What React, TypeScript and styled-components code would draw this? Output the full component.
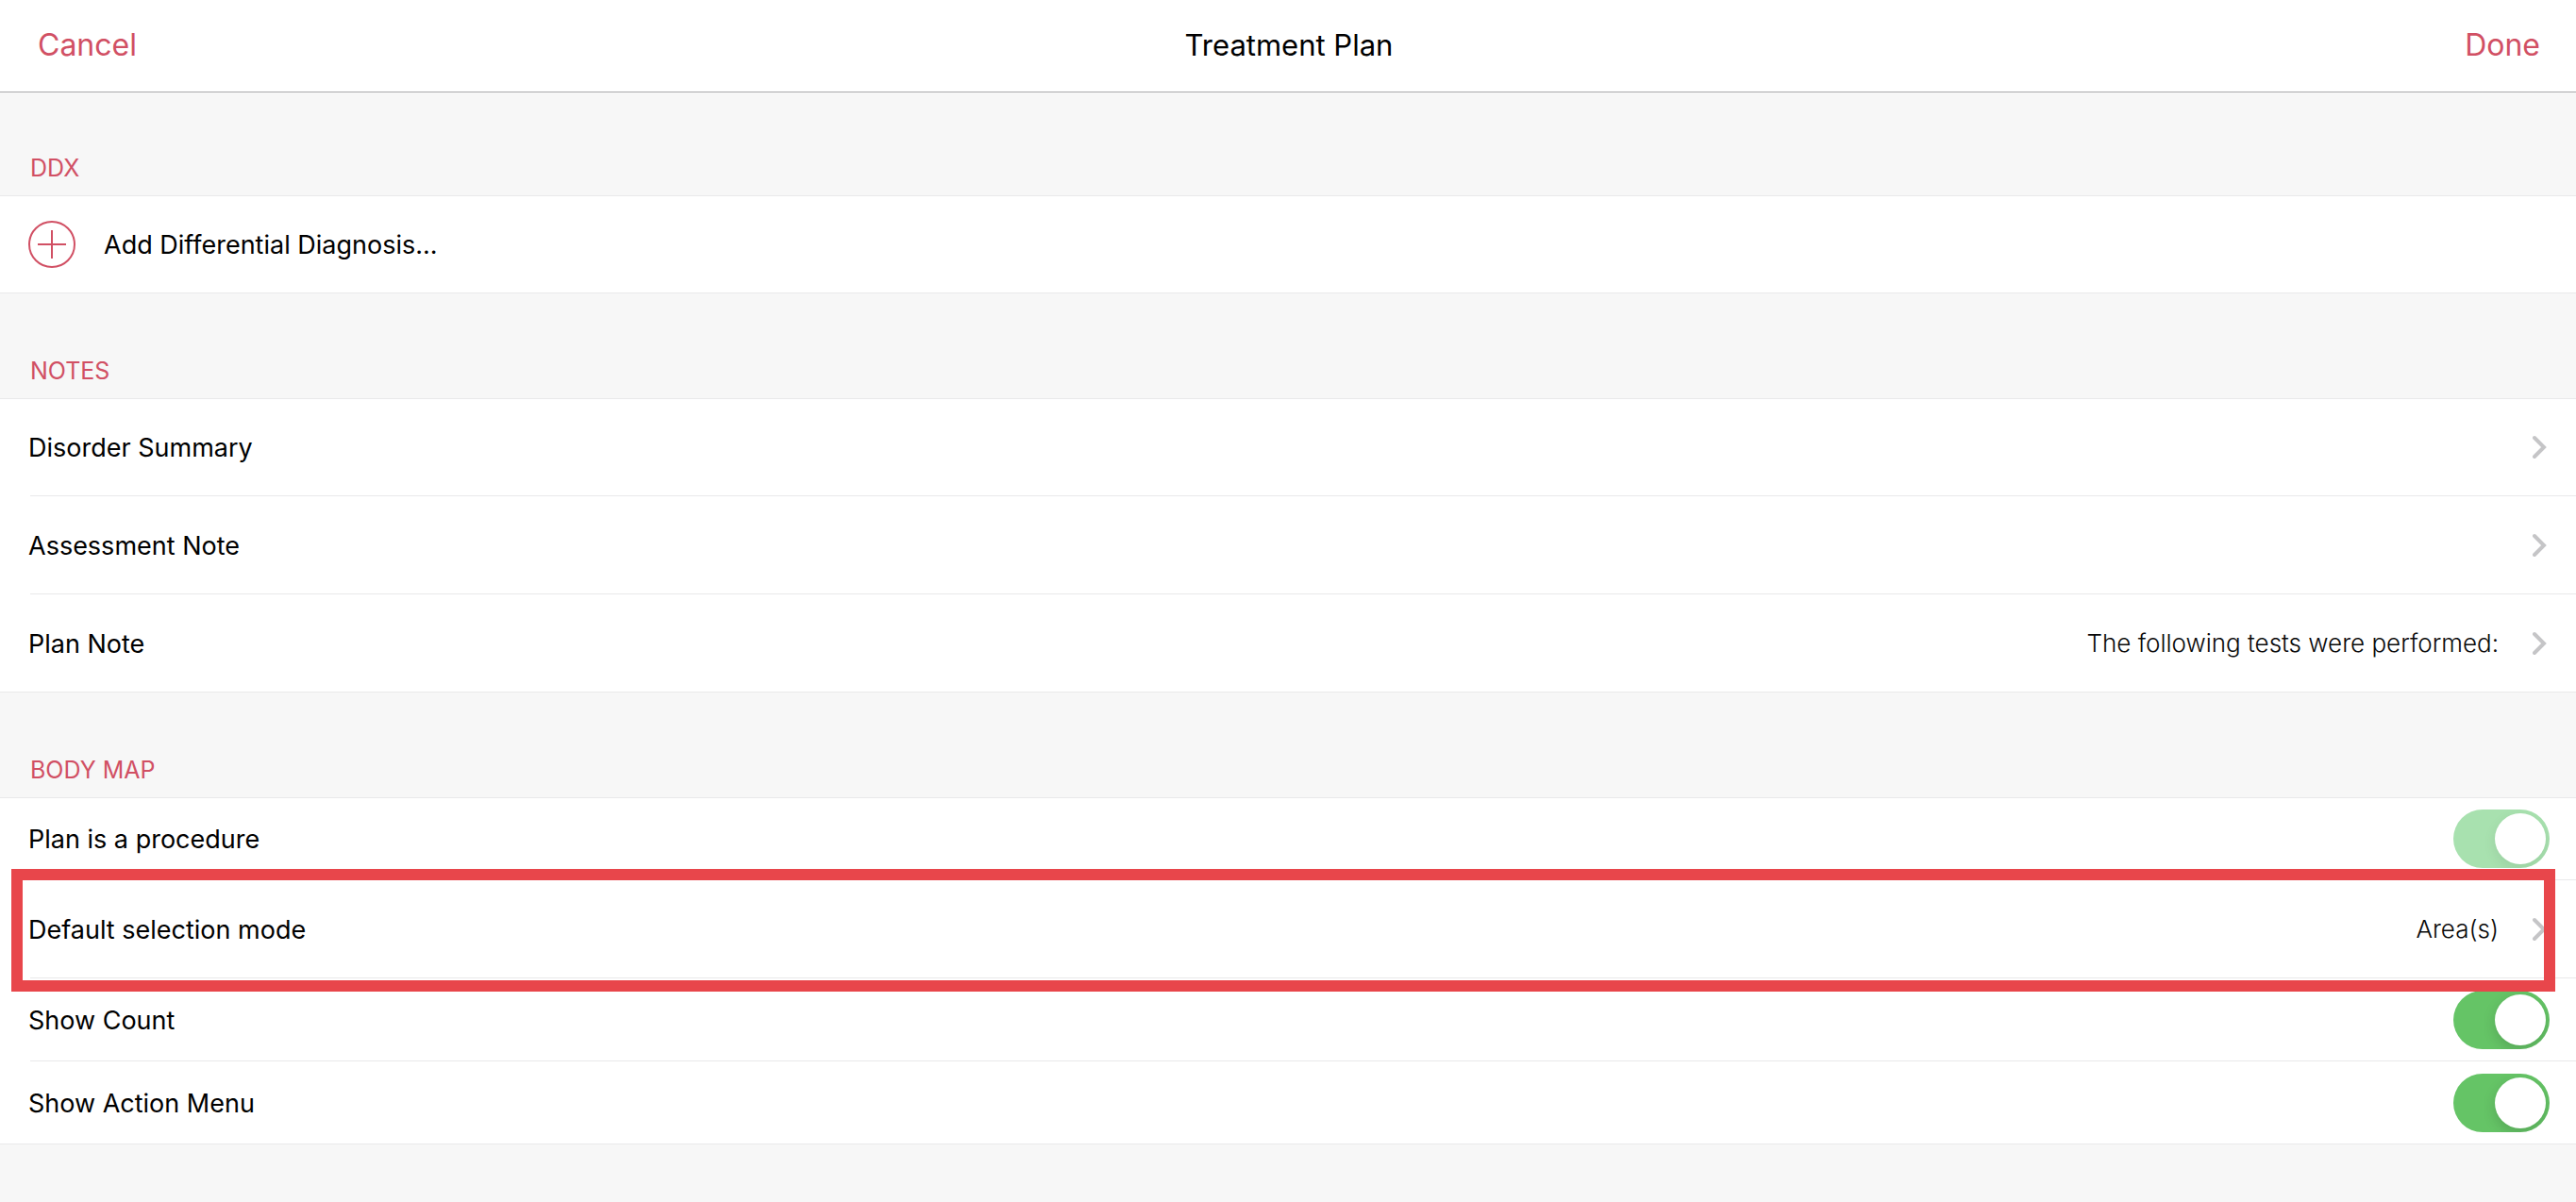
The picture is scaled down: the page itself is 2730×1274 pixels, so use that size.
import React, { useState } from "react";
import styled, { createGlobalStyle, css } from "styled-components";

const color = {
  tint: "#d15064",
  page: "#f7f7f7",
  surface: "#ffffff",
  line: "#e9e9ea",
  bar: "#a9a9ab",
  text: "#000000",
  value: "#0a0a0a",
  chevron: "#c5c5c7",
  on: "#65c466",
  onDisabled: "#a8e1af",
  off: "#e9e9ea",
  highlight: "#e8464b",
};

const GlobalStyle = createGlobalStyle`
  *, *::before, *::after { box-sizing: border-box; }
  html { background: ${color.page}; }
  body {
    margin: 0;
    background: ${color.page};
    color: ${color.text};
    font-family: Inter, "Liberation Sans", sans-serif;
    font-size: 27px;
    line-height: 36px;
  }
`;

const bareButton = css`
  margin: 0;
  border: 0;
  background: none;
  color: inherit;
  font: inherit;
  text-align: left;
  cursor: pointer;
`;

const NavBar = styled.header`
  display: grid;
  grid-template-columns: 1fr auto 1fr;
  align-items: baseline;
  align-content: start;
  min-height: 98px;
  padding: 26px 38px 25px 40px;
  background: ${color.surface};
  border-bottom: 1px solid ${color.bar};
`;

const NavButton = styled.button<{ $end?: boolean }>`
  ${bareButton}
  padding: 0;
  justify-self: ${(p) => (p.$end ? "end" : "start")};
  color: ${color.tint};
  font-size: 32px;
  line-height: 44px;
`;

const Title = styled.h1`
  margin: 0;
  font-size: 31px;
  font-weight: 400;
  line-height: 44px;
`;

const Sections = styled.main`
  display: flex;
  flex-direction: column;
  margin-top: -2px;
`;

const SectionTitle = styled.h2`
  margin: 0;
  padding: 64px 32px 11px;
  color: ${color.tint};
  font-size: 25px;
  font-weight: 400;
  line-height: 36px;
`;

const List = styled.ul`
  margin: 0;
  padding: 0;
  list-style: none;
  background: ${color.surface};
`;

const Item = styled.li<{ $compact?: boolean; $highlighted?: boolean }>`
  display: flex;
  flex-direction: column;
  min-height: ${(p) => (p.$compact ? 88 : 104)}px;

  &:first-child {
    border-top: 1px solid ${color.line};
  }

  &::after {
    content: "";
    height: 1px;
    margin-left: 32px;
    background: ${color.line};
  }

  &:last-child::after {
    margin-left: 0;
  }

  ${(p) =>
    p.$highlighted &&
    css`
      position: relative;

      &::before {
        content: "";
        position: absolute;
        z-index: 1;
        inset: -12px 22px -14px 12px;
        border: 12px solid ${color.highlight};
        pointer-events: none;
      }
    `}
`;

const rowLayout = css`
  display: flex;
  flex: 1;
  align-items: center;
  width: 100%;
  padding: 0 28px 0 30px;
`;

const RowButton = styled.button`
  ${bareButton}
  ${rowLayout}
`;

const RowLabel = styled.label`
  ${rowLayout}
`;

const RowText = styled.span`
  flex: 1;
  padding-top: 2px;
`;

const Value = styled.span`
  margin-right: 36px;
  color: ${color.value};
  font-size: 26px;
  font-weight: 300;
`;

const Chevron = styled.svg`
  width: 18px;
  height: 28px;
  fill: none;
  stroke: ${color.chevron};
  stroke-width: 4;
  stroke-linecap: round;
  stroke-linejoin: miter;
`;

const AddIcon = styled.svg`
  width: 50px;
  height: 50px;
  margin-right: 30px;
  fill: none;
  stroke: ${color.tint};
  stroke-width: 2;
`;

const Switch = styled.input`
  appearance: none;
  display: flex;
  justify-content: flex-start;
  width: 102px;
  height: 62px;
  margin: 0;
  padding: 4px;
  border-radius: 31px;
  overflow: hidden;
  background: ${color.off};

  &::before {
    content: "";
    width: 54px;
    height: 54px;
    border-radius: 50%;
    background: ${color.surface};
    box-shadow: 0 5px 14px rgba(0, 0, 0, 0.15);
  }

  &:checked {
    justify-content: flex-end;
    background: ${color.on};
  }

  &:checked:disabled {
    background: ${color.onDisabled};
  }

  &:disabled::before {
    box-shadow: 0 5px 14px rgba(0, 0, 0, 0.08);
  }
`;

function LinkRow({
  label,
  value,
  highlighted,
}: {
  label: string;
  value?: string;
  highlighted?: boolean;
}) {
  return (
    <Item $highlighted={highlighted}>
      <RowButton type="button">
        <RowText>{label}</RowText>
        {value && <Value>{value}</Value>}
        <Chevron viewBox="0 0 18 28" aria-hidden="true">
          <path d="M2 4 L12 14 L2 24" />
        </Chevron>
      </RowButton>
    </Item>
  );
}

function SwitchRow({
  id,
  label,
  disabled,
}: {
  id: string;
  label: string;
  disabled?: boolean;
}) {
  const [on, setOn] = useState(true);
  return (
    <Item $compact>
      <RowLabel htmlFor={id}>
        <RowText>{label}</RowText>
        <Switch
          id={id}
          type="checkbox"
          checked={on}
          disabled={disabled}
          onChange={(e) => setOn(e.target.checked)}
        />
      </RowLabel>
    </Item>
  );
}

export default function App() {
  return (
    <>
      <GlobalStyle />
      <NavBar>
        <NavButton type="button">Cancel</NavButton>
        <Title>Treatment Plan</Title>
        <NavButton type="button" $end>
          Done
        </NavButton>
      </NavBar>
      <Sections>
        <section>
          <SectionTitle>DDX</SectionTitle>
          <List>
            <Item>
              <RowButton type="button">
                <AddIcon viewBox="0 0 50 50" aria-hidden="true">
                  <circle cx="25" cy="25" r="24" />
                  <path d="M10 25 H40 M25 10 V40" />
                </AddIcon>
                <RowText>Add Differential Diagnosis...</RowText>
              </RowButton>
            </Item>
          </List>
        </section>
        <section>
          <SectionTitle>NOTES</SectionTitle>
          <List>
            <LinkRow label="Disorder Summary" />
            <LinkRow label="Assessment Note" />
            <LinkRow label="Plan Note" value="The following tests were performed:" />
          </List>
        </section>
        <section>
          <SectionTitle>BODY MAP</SectionTitle>
          <List>
            <SwitchRow id="procedure" label="Plan is a procedure" disabled />
            <LinkRow label="Default selection mode" value="Area(s)" highlighted />
            <SwitchRow id="count" label="Show Count" />
            <SwitchRow id="action-menu" label="Show Action Menu" />
          </List>
        </section>
      </Sections>
    </>
  );
}
